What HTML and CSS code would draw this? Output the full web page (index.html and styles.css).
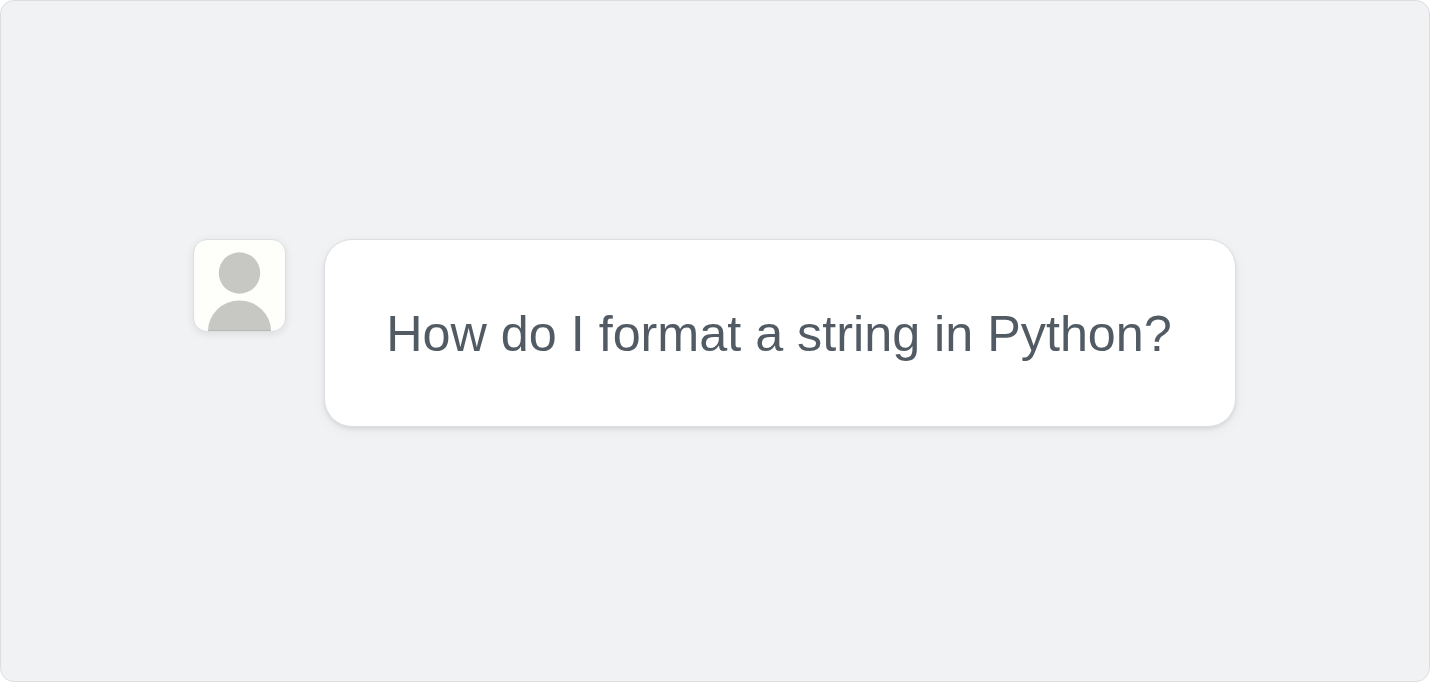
FILE: index.html
```
<!DOCTYPE html>
<html lang="en">
<head>
<meta charset="utf-8">
<title>Chat message</title>
<link rel="stylesheet" href="styles.css">
</head>
<body>
<main class="frame">
  <div class="message">
    <div class="avatar">
      <svg class="avatar-icon" viewBox="0 0 91 91" aria-hidden="true">
        <circle cx="45.5" cy="33" r="20.7"/>
        <path d="M14 91A31.5 30.5 0 0 1 77 91z"/>
        <rect class="avatar-edge" x="14" y="90" width="63" height="1"/>
      </svg>
    </div>
    <div class="bubble"><span class="bubble-text">How do I format a string in Python?</span></div>
  </div>
</main>
</body>
</html>
```
FILE: styles.css
```
* { box-sizing: border-box; }
html, body { margin: 0; height: 100%; }
body { font-family: "Liberation Sans", Arial, sans-serif; background: #fff; }
.frame {
  width: 1430px;
  height: 682px;
  background: #f0f2f4;
  border: 1px solid #dcdee2;
  border-radius: 14px;
  display: flex;
  align-items: center;
  justify-content: center;
  padding-bottom: 16px;
  padding-right: 1px;
}
.message {
  display: flex;
  align-items: flex-start;
  gap: 38px;
}
.avatar {
  width: 93px;
  height: 93px;
  background: #fefefa;
  border-radius: 14px;
  border: 1px solid #dddfe2;
  box-shadow: 0 2px 8px rgba(0, 0, 0, 0.09);
  overflow: hidden;
  flex: none;
}
.avatar-icon { display: block; width: 100%; height: 100%; fill: #c7c8c3; }
.avatar-edge { fill: #b9bab6; }
.bubble {
  width: 912px;
  height: 188px;
  flex: none;
  display: flex;
  align-items: center;
  justify-content: center;
  padding: 1px 2px 0 0;
  background: #fff;
  border: 1px solid #dcdee2;
  border-radius: 28px;
  box-shadow: 0 2px 4px rgba(0, 0, 0, 0.09), 0 4px 16px rgba(0, 0, 0, 0.04);
  white-space: nowrap;
}
.bubble-text {
  color: #525b64;
  font-size: 50.3px;
}
```
